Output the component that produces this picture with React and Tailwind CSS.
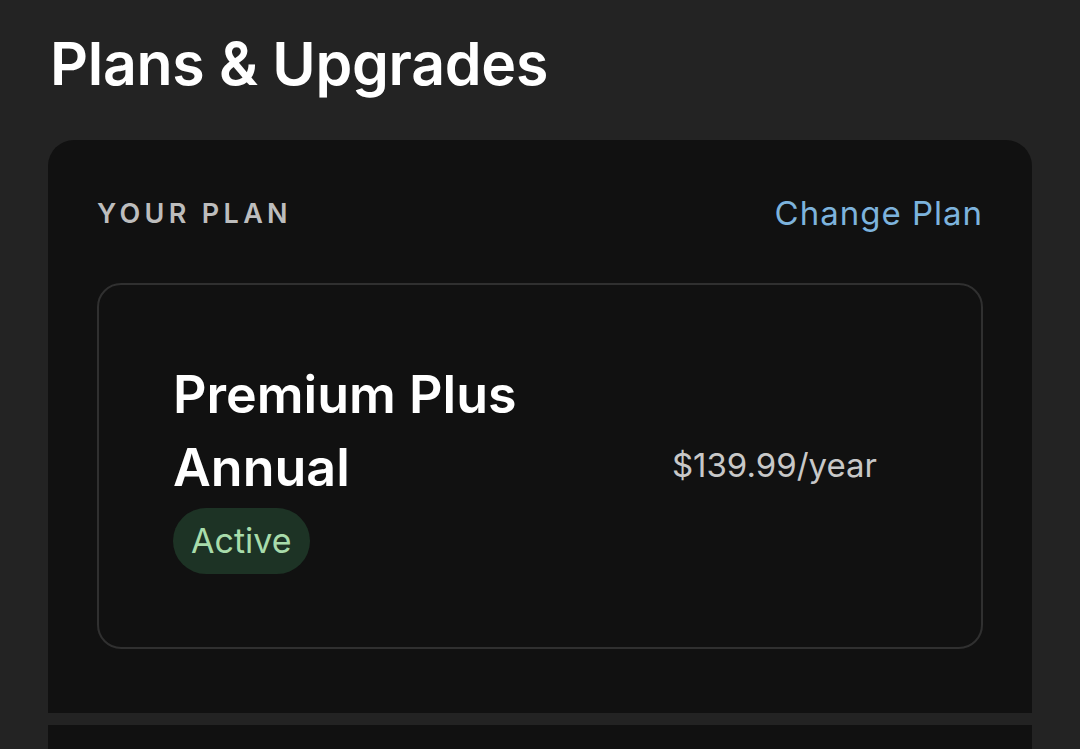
import React from "react";

const App = () => (
  <div className="min-h-screen w-full bg-[#232323] px-[48px] pt-[26px] overflow-hidden" style={{ fontFamily: "Inter, 'Noto Sans', sans-serif" }}>
    <h1 className="pl-[2px] text-[59px] leading-[76px] font-semibold tracking-[-0.005em] text-white">Plans &amp; Upgrades</h1>

    <div className="mt-[38px] rounded-t-[26px] bg-[#111111] px-[49px] pt-[49px] pb-[64px]">
      <div className="flex items-center justify-between">
        <span className="text-[27px] font-semibold tracking-[0.16em] text-[#bdbdbd]">YOUR PLAN</span>
        <a className="text-[33px] tracking-[0.03em] text-[#7db3dd]">Change Plan</a>
      </div>

      <div className="mt-[44px] flex h-[366px] items-center justify-between rounded-[24px] border-2 border-[#303030] pl-[74px] pr-[104px]">
        <div className="flex flex-col items-start">
          <p className="text-[52px] leading-[73px] font-semibold text-white">
            Premium Plus
            <br />
            Annual
          </p>
          <span className="mt-[4px] rounded-full bg-[#1d3325] px-[18px] py-[10px] text-[34px] leading-[46px] text-[#a8dcab]">Active</span>
        </div>
        <span className="text-[33px] text-[#c8c8c8]">$139.99/year</span>
      </div>
    </div>

    <div className="mt-[12px] h-[200px] bg-[#111111]" />
  </div>
);

export default App;
